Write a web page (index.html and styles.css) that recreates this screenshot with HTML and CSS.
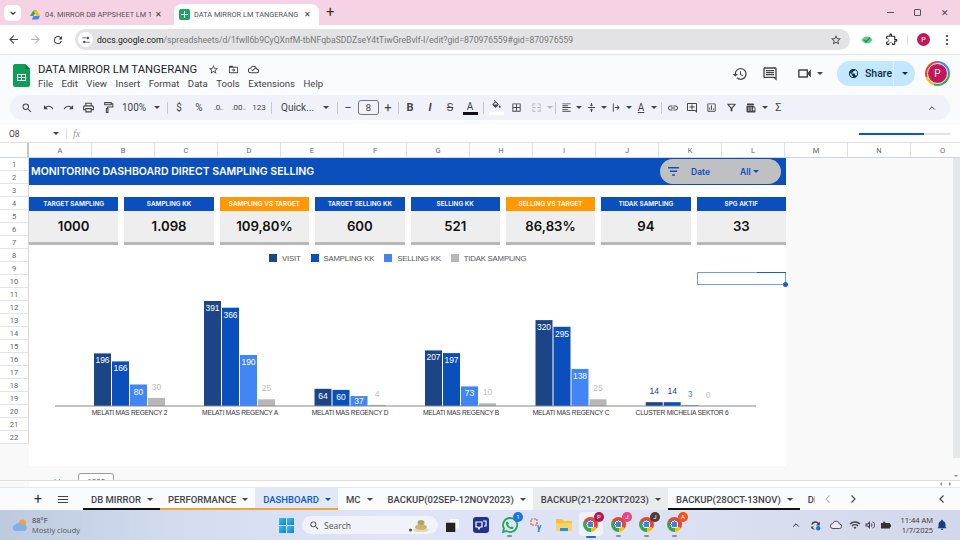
FILE: index.html
```html
<!DOCTYPE html>
<html lang="en">
<head>
    <meta charset="UTF-8">
    <meta name="viewport" content="width=device-width, initial-scale=1.0">
    <title>DATA MIRROR LM TANGERANG</title>
    <link rel="stylesheet" href="styles.css">
</head>
<body>
    <svg class="sprite" aria-hidden="true">
        <symbol id="i-back" viewBox="0 0 24 24"><path d="M20 11H7.8l5.6-5.6L12 4l-8 8 8 8 1.4-1.4L7.8 13H20z"/></symbol>
        <symbol id="i-forward" viewBox="0 0 24 24"><path d="M4 11h12.2l-5.6-5.6L12 4l8 8-8 8-1.4-1.4 5.6-5.6H4z"/></symbol>
        <symbol id="i-reload" viewBox="0 0 24 24"><path d="M17.65 6.35A7.96 7.96 0 0 0 12 4a8 8 0 1 0 7.73 10h-2.08A6 6 0 1 1 12 6c1.66 0 3.14.69 4.22 1.78L13 11h7V4l-2.35 2.35z"/></symbol>
        <symbol id="i-tune" viewBox="0 0 24 24"><path d="M3 6h9v2H3zM16 4a3 3 0 1 1 0 6 3 3 0 0 1 0-6zm0 2v2a1 1 0 0 0 0-2zM12 16h9v2h-9zM8 14a3 3 0 1 1 0 6 3 3 0 0 1 0-6zm0 2a1 1 0 0 0 0 2z"/></symbol>
        <symbol id="i-star" viewBox="0 0 24 24"><path d="M22 9.24l-7.19-.62L12 2 9.19 8.63 2 9.24l5.46 4.73L5.82 21 12 17.27 18.18 21l-1.63-7.03L22 9.24zM12 15.4l-3.76 2.27 1-4.28-3.32-2.88 4.38-.38L12 6.1l1.71 4.04 4.38.38-3.32 2.88 1 4.28L12 15.4z"/></symbol>
        <symbol id="i-puzzle" viewBox="0 0 24 24"><path d="M20.5 11H19V7a2 2 0 0 0-2-2h-4V3.5a2.5 2.5 0 0 0-5 0V5H4a2 2 0 0 0-2 2v3.8h1.5a2.7 2.7 0 0 1 0 5.4H2V20a2 2 0 0 0 2 2h3.8v-1.5a2.7 2.7 0 0 1 5.4 0V22H17a2 2 0 0 0 2-2v-4h1.5a2.5 2.5 0 0 0 0-5zm0 3H17v6h-2.1a4.7 4.7 0 0 0-8.8 0H4v-2.1a4.7 4.7 0 0 0 0-8.8V7h6V3.5a.5.5 0 0 1 1 0V7h6v6h3.5a.5.5 0 0 1 0 1z"/></symbol>
        <symbol id="i-search" viewBox="0 0 24 24"><path d="M15.5 14h-.79l-.28-.27A6.471 6.471 0 0 0 16 9.5 6.5 6.5 0 1 0 9.5 16c1.61 0 3.09-.59 4.23-1.57l.27.28v.79l5 4.99L20.49 19l-4.99-5zm-6 0C7.01 14 5 11.99 5 9.5S7.01 5 9.5 5 14 7.01 14 9.5 11.99 14 9.5 14z"/></symbol>
        <symbol id="i-undo" viewBox="0 0 24 24"><path d="M12.5 8c-2.65 0-5.05.99-6.9 2.6L2 7v9h9l-3.62-3.62c1.39-1.16 3.16-1.88 5.12-1.88 3.54 0 6.55 2.31 7.6 5.5l2.37-.78C21.08 11.03 17.15 8 12.5 8z"/></symbol>
        <symbol id="i-redo" viewBox="0 0 24 24"><path d="M18.4 10.6C16.55 8.99 14.15 8 11.5 8c-4.65 0-8.58 3.03-9.96 7.22L3.9 16c1.05-3.19 4.05-5.5 7.6-5.5 1.95 0 3.73.72 5.12 1.88L13 16h9V7l-3.6 3.6z"/></symbol>
        <symbol id="i-print" viewBox="0 0 24 24"><path d="M19 8h-1V3H6v5H5c-1.66 0-3 1.34-3 3v6h4v4h12v-4h4v-6c0-1.66-1.34-3-3-3zM8 5h8v3H8V5zm8 12v2H8v-4h8v2zm2-2v-2H6v2H4v-4c0-.55.45-1 1-1h14c.55 0 1 .45 1 1v4h-2z"/></symbol>
        <symbol id="i-paint" viewBox="0 0 24 24"><path d="M18 4V3a1 1 0 0 0-1-1H5a1 1 0 0 0-1 1v4a1 1 0 0 0 1 1h12a1 1 0 0 0 1-1V6h1v4H9v3H8a1 1 0 0 0-1 1v7a1 1 0 0 0 1 1h3a1 1 0 0 0 1-1v-7a1 1 0 0 0-1-1v-1h10V4h-3zm-2 2H6V4h10v2zm-6 14H9v-5h1v5z"/></symbol>
        <symbol id="i-fill" viewBox="0 0 24 24"><path d="M16.56 8.94L7.62 0 6.21 1.41l2.38 2.38-5.15 5.15a1.49 1.49 0 0 0 0 2.12l5.5 5.5c.29.29.68.44 1.06.44s.77-.15 1.06-.44l5.5-5.5c.59-.58.59-1.53 0-2.12zM5.21 10L10 5.21 14.79 10H5.21zM19 11.5s-2 2.17-2 3.5c0 1.1.9 2 2 2s2-.9 2-2c0-1.33-2-3.5-2-3.5z"/></symbol>
        <symbol id="i-borders" viewBox="0 0 24 24"><path d="M3 3v18h18V3H3zm8 16H5v-6h6v6zm0-8H5V5h6v6zm8 8h-6v-6h6v6zm0-8h-6V5h6v6z"/></symbol>
        <symbol id="i-merge" viewBox="0 0 24 24"><path d="M3 3h7v2H5v4H3zM14 3h7v6h-2V5h-5zM3 15h2v4h5v2H3zM19 15h2v6h-7v-2h5zM3 11h7v2H3zM14 11h7v2h-7z"/></symbol>
        <symbol id="i-align" viewBox="0 0 24 24"><path d="M3 3h18v2H3zM3 7h12v2H3zM3 11h18v2H3zM3 15h12v2H3zM3 19h18v2H3z"/></symbol>
        <symbol id="i-valign" viewBox="0 0 24 24"><path d="M8 18h3v4h2v-4h3l-4-4-4 4zM16 6h-3V2h-2v4H8l4 4 4-4zM4 11h16v2H4z"/></symbol>
        <symbol id="i-wrap" viewBox="0 0 24 24"><path d="M4 3h2v18H4zM8 11h7.2l-2.6-2.6L14 7l5 5-5 5-1.4-1.4 2.6-2.6H8z"/></symbol>
        <symbol id="i-link" viewBox="0 0 24 24"><path d="M3.9 12c0-1.71 1.39-3.1 3.1-3.1h4V7H7c-2.76 0-5 2.24-5 5s2.24 5 5 5h4v-1.9H7c-1.71 0-3.1-1.39-3.1-3.1zM8 13h8v-2H8v2zm9-6h-4v1.9h4c1.71 0 3.1 1.39 3.1 3.1s-1.39 3.1-3.1 3.1h-4V17h4c2.76 0 5-2.24 5-5s-2.24-5-5-5z"/></symbol>
        <symbol id="i-addcomment" viewBox="0 0 24 24"><path d="M22 4a2 2 0 0 0-2-2H4a2 2 0 0 0-2 2v12a2 2 0 0 0 2 2h14l4 4V4zm-2 13.2L18.8 16H4V4h16v13.2zM13 5h-2v4H7v2h4v4h2v-4h4V9h-4z"/></symbol>
        <symbol id="i-chart" viewBox="0 0 24 24"><path d="M19 3H5a2 2 0 0 0-2 2v14a2 2 0 0 0 2 2h14a2 2 0 0 0 2-2V5a2 2 0 0 0-2-2zm0 16H5V5h14v14zM7 12h2v5H7zM11 7h2v10h-2zM15 14h2v3h-2z"/></symbol>
        <symbol id="i-filter" viewBox="0 0 24 24"><path d="M3 4h18v2l-7 8v6h-4v-6L3 6V4zm3.2 2l5.8 6.7L17.8 6H6.2z"/></symbol>
        <symbol id="i-func" viewBox="0 0 24 24"><path d="M4 3h12a2 2 0 0 1 2 2v2H4zM3 8h13a5 5 0 0 1 5 5v6a2 2 0 0 1-2 2H5a2 2 0 0 1-2-2zm3 3v2h3v-2zm5 0v2h3v-2zm-5 4v2h3v-2zm5 0v2h3v-2zm5-4v6h3v-6z"/></symbol>
        <symbol id="i-history" viewBox="0 0 24 24"><path d="M13 3a9 9 0 0 0-9 9H1l3.89 3.89.07.14L9 12H6c0-3.87 3.13-7 7-7s7 3.13 7 7-3.13 7-7 7c-1.93 0-3.68-.79-4.94-2.06l-1.42 1.42A8.954 8.954 0 0 0 13 21a9 9 0 0 0 0-18zm-1 5v5l4.28 2.54.72-1.21-3.5-2.08V8H12z"/></symbol>
        <symbol id="i-comment" viewBox="0 0 24 24"><path d="M21.99 4c0-1.1-.89-2-1.99-2H4c-1.1 0-2 .9-2 2v12c0 1.1.9 2 2 2h14l4 4-.01-18zM20 4v13.17L18.83 16H4V4h16zM6 12h12v2H6zm0-3h12v2H6zm0-3h12v2H6z"/></symbol>
        <symbol id="i-video" viewBox="0 0 24 24"><path d="M15 8v8H5V8h10m1-2H4c-.55 0-1 .45-1 1v10c0 .55.45 1 1 1h12c.55 0 1-.45 1-1v-3.5l4 4v-11l-4 4V7c0-.55-.45-1-1-1z"/></symbol>
        <symbol id="i-public" viewBox="0 0 24 24"><path d="M12 2C6.48 2 2 6.48 2 12s4.48 10 10 10 10-4.48 10-10S17.52 2 12 2zm-1 17.93c-3.95-.49-7-3.85-7-7.93 0-.62.08-1.21.21-1.79L9 15v1c0 1.1.9 2 2 2v1.93zm6.9-2.54c-.26-.81-1-1.39-1.9-1.39h-1v-3c0-.55-.45-1-1-1H8v-2h2c.55 0 1-.45 1-1V7h2c1.1 0 2-.9 2-2v-.41c2.93 1.19 5 4.06 5 7.41 0 2.08-.8 3.97-2.1 5.39z"/></symbol>
        <symbol id="i-bell" viewBox="0 0 24 24"><path d="M12 22a2.5 2.5 0 0 0 2.5-2.5h-5A2.5 2.5 0 0 0 12 22zm7-6v-5c0-3.4-1.9-6.1-5-6.8V3.5a2 2 0 0 0-4 0v.7C6.9 4.9 5 7.6 5 11v5l-2 2v.5h18V18z"/></symbol>
        <symbol id="i-wifi" viewBox="0 0 24 24"><path d="M1 9l2 2a12.7 12.7 0 0 1 18 0l2-2A15.6 15.6 0 0 0 1 9zm4 4l2 2a7 7 0 0 1 10 0l2-2a9.9 9.9 0 0 0-14 0zm4 4l3 3 3-3a4.2 4.2 0 0 0-6 0z"/></symbol>
        <symbol id="i-volume" viewBox="0 0 24 24"><path d="M3 9v6h4l5 5V4L7 9H3zm7 .8v4.4L7.8 13H5v-2h2.8L10 9.8zM14.5 8v8a4.5 4.5 0 0 0 0-8zM17 4.5v2a6 6 0 0 1 0 11v2a8 8 0 0 0 0-15z"/></symbol>
    </svg>

    <div class="tabstrip">
        <span class="tab-menu"><svg class="ic ic8" viewBox="0 0 10 10"><path d="M2 3.5l3 3 3-3" fill="none" stroke="#222" stroke-width="1.4"/></svg></span>
        <div class="browser-tab">
            <svg class="ic ic12" viewBox="0 0 24 24"><path d="M8.5 3h7L9 14H2z" fill="#34a853"/><path d="M15.5 3L22 14h-7L8.5 3z" fill="#fbbc04"/><path d="M5.5 21L9 14h13l-3.5 7z" fill="#4285f4"/></svg>
            <span class="browser-tab-title">04. MIRROR DB APPSHEET LM T</span>
            <span class="tab-x">✕</span>
        </div>
        <div class="browser-tab is-active">
            <span class="sheets-mini"></span>
            <span class="browser-tab-title">DATA MIRROR LM TANGERANG</span>
            <span class="tab-x">✕</span>
        </div>
        <span class="tab-new">+</span>
        <div class="window-btns">
            <span class="win-min"></span>
            <span class="win-max"></span>
            <span class="win-close">✕</span>
        </div>
    </div>

    <div class="addressbar">
        <svg class="ic ic13"><use href="#i-back"/></svg>
        <svg class="ic ic13 is-dim"><use href="#i-forward"/></svg>
        <svg class="ic ic12"><use href="#i-reload"/></svg>
        <div class="omnibox">
            <span class="omni-tune"><svg class="ic ic10"><use href="#i-tune"/></svg></span>
            <span class="omni-url"><b>docs.google.com</b>/spreadsheets/d/1fwll6b9CyQXnfM-tbNFqbaSDDZseY4tTiwGreBvlf-I/edit?gid=870976559#gid=870976559</span>
            <svg class="ic ic12"><use href="#i-star"/></svg>
        </div>
        <svg class="ic ic12 ext-eye" viewBox="0 0 24 24"><path d="M1 12c3-5 7-7 11-7s8 2 11 7c-3 5-7 7-11 7S4 17 1 12z" fill="#5fc98b"/><path d="M7 12l3 4 8-9" fill="none" stroke="#1a8f4c" stroke-width="2.4"/></svg>
        <svg class="ic ic13 ext-puzzle"><use href="#i-puzzle"/></svg>
        <span class="addr-sep"></span>
        <span class="profile-dot">P</span>
        <span class="kebab"><i></i><i></i><i></i></span>
    </div>

    <header class="docs-head">
        <div class="docs-top">
            <svg class="sheets-logo" viewBox="0 0 17 23"><path d="M2 0h10l5 5v16a2 2 0 0 1-2 2H2a2 2 0 0 1-2-2V2a2 2 0 0 1 2-2z" fill="#0f9d58"/><path d="M12 0l5 5h-5z" fill="#0b7a44"/><path d="M4 10h9v7H4zm1 1v2h3v-2zm4 0v2h3v-2zm-4 3v2h3v-2zm4 0v2h3v-2z" fill="#fff"/></svg>
            <div class="docs-titles">
                <div class="docs-title-row">
                    <span class="docs-title">DATA MIRROR LM TANGERANG</span>
                    <svg class="ic ic11"><use href="#i-star"/></svg>
                    <svg class="ic ic11" viewBox="0 0 24 24"><path d="M10 4l2 2h8a2 2 0 0 1 2 2v10a2 2 0 0 1-2 2H4a2 2 0 0 1-2-2V6a2 2 0 0 1 2-2zM4 8v10h16V8zm8 1l4 4-4 4v-3H8v-2h4z"/></svg>
                    <svg class="ic ic11" viewBox="0 0 24 24"><path d="M19.4 10A7.5 7.5 0 0 0 5.4 8 6 6 0 0 0 6 20h13a5 5 0 0 0 .4-10zM19 18H6a4 4 0 0 1 0-8h.7A5.5 5.5 0 0 1 17.5 11.5V12H19a3 3 0 0 1 0 6zM10 16l-3-3 1.4-1.4L10 13.2l5.6-5.6L17 9z"/></svg>
                </div>
                <nav class="docs-menu">
                    <span>File</span><span>Edit</span><span>View</span><span>Insert</span><span>Format</span><span>Data</span><span>Tools</span><span>Extensions</span><span>Help</span>
                </nav>
            </div>
            <div class="docs-actions">
                <svg class="ic ic16 act-history"><use href="#i-history"/></svg>
                <svg class="ic ic16 act-comment"><use href="#i-comment"/></svg>
                <svg class="ic ic17 act-video"><use href="#i-video"/></svg>
                <span class="caret act-caret"></span>
                <div class="share">
                    <span class="share-main"><svg class="ic ic11"><use href="#i-public"/></svg>Share</span>
                    <span class="share-more"><span class="caret"></span></span>
                </div>
                <span class="avatar"><span>P</span></span>
            </div>
        </div>
        <div class="toolbar">
            <span class="tb tb-first"><svg class="ic ic12"><use href="#i-search"/></svg></span>
            <span class="tb"><svg class="ic ic11"><use href="#i-undo"/></svg></span>
            <span class="tb"><svg class="ic ic11"><use href="#i-redo"/></svg></span>
            <span class="tb"><svg class="ic ic13"><use href="#i-print"/></svg></span>
            <span class="tb"><svg class="ic ic13"><use href="#i-paint"/></svg></span>
            <span class="tb-text tb-zoom">100%</span>
            <span class="tb-caret"><span class="caret"></span></span>
            <span class="tb-sep sep-zoom"></span>
            <span class="tb tb-sym">$</span>
            <span class="tb tb-sym">%</span>
            <span class="tb tb-sym tb-small">.0<sub>←</sub></span>
            <span class="tb tb-sym tb-small">.00<sub>→</sub></span>
            <span class="tb tb-sym tb-small">123</span>
            <span class="tb-sep sep-num"></span>
            <span class="tb-text tb-font">Quick...</span>
            <span class="tb-caret"><span class="caret"></span></span>
            <span class="tb-sep sep-font"></span>
            <span class="tb tb-sym tb-big">−</span>
            <span class="tb-size">8</span>
            <span class="tb tb-sym tb-big tb-plus">+</span>
            <span class="tb-sep sep-size"></span>
            <span class="tb tb-sym tb-b">B</span>
            <span class="tb tb-sym tb-i">I</span>
            <span class="tb tb-sym tb-s">S</span>
            <span class="tb tb-sym tb-a"><span>A</span></span>
            <span class="tb-sep sep-size"></span>
            <span class="tb tb-fill"><svg class="ic ic11"><use href="#i-fill"/></svg><i></i></span>
            <span class="tb"><svg class="ic ic11"><use href="#i-borders"/></svg></span>
            <span class="tb is-off"><svg class="ic ic11"><use href="#i-merge"/></svg></span>
            <span class="tb-caret tb-caret-sm is-off"><span class="caret"></span></span>
            <span class="tb-sep sep-merge"></span>
            <span class="tb tb-n tb-align"><svg class="ic ic11"><use href="#i-align"/></svg></span>
            <span class="tb-caret"><span class="caret"></span></span>
            <span class="tb tb-n"><svg class="ic ic11"><use href="#i-valign"/></svg></span>
            <span class="tb-caret"><span class="caret"></span></span>
            <span class="tb tb-n"><svg class="ic ic11"><use href="#i-wrap"/></svg></span>
            <span class="tb-caret"><span class="caret"></span></span>
            <span class="tb tb-n tb-sym tb-rot">A</span>
            <span class="tb-caret"><span class="caret"></span></span>
            <span class="tb-sep sep-rot"></span>
            <span class="tb tb-m"><svg class="ic ic12"><use href="#i-link"/></svg></span>
            <span class="tb tb-m"><svg class="ic ic12"><use href="#i-addcomment"/></svg></span>
            <span class="tb tb-m"><svg class="ic ic11"><use href="#i-chart"/></svg></span>
            <span class="tb tb-m"><svg class="ic ic11"><use href="#i-filter"/></svg></span>
            <span class="tb tb-m"><svg class="ic ic12"><use href="#i-func"/></svg></span>
            <span class="tb-caret tb-caret-sm"><span class="caret"></span></span>
            <span class="tb tb-sym tb-sigma">Σ</span>
            <span class="tb tb-collapse"><svg class="ic ic8" viewBox="0 0 10 10"><path d="M1.5 7L5 3.5 8.5 7" fill="none" stroke="#444" stroke-width="1.2"/></svg></span>
        </div>
    </header>

    <div class="formula-bar">
        <span class="name-box">O8</span>
        <span class="caret"></span>
        <span class="fx-sep"></span>
        <span class="fx">fx</span>
        <span class="hscroll"><i></i></span>
    </div>

    <div class="col-heads">
        <span class="corner"></span>
        <span>A</span><span>B</span><span>C</span><span>D</span><span>E</span><span>F</span><span>G</span><span>H</span><span>I</span><span>J</span><span>K</span><span>L</span><span>M</span><span>N</span><span class="col-last">O</span>
    </div>

    <div class="sheet">
        <div class="row-heads">
            <span>1</span><span>2</span><span>3</span><span>4</span><span>5</span><span>6</span><span>7</span><span>8</span><span>9</span><span>10</span><span>11</span>
            <span>12</span><span>13</span><span>14</span><span>15</span><span>16</span><span>17</span><span>18</span><span>19</span><span>20</span><span>21</span><span>22</span>
        </div>
        <main class="dash">
            <div class="banner">
                <h1>MONITORING DASHBOARD DIRECT SAMPLING SELLING</h1>
                <div class="date-pill">
                    <svg class="pill-filter" viewBox="0 0 12 10"><path d="M0 0h12v1.6H0zM2 4h8v1.6H2zM4.5 8h3v1.6h-3z"/></svg>
                    <span class="pill-label">Date</span>
                    <span class="pill-value">All</span>
                    <span class="caret"></span>
                </div>
            </div>
            <div class="cards">
                <div class="card"><div class="card-head">TARGET SAMPLING</div><div class="card-value">1000</div></div>
                <div class="card"><div class="card-head">SAMPLING KK</div><div class="card-value">1.098</div></div>
                <div class="card is-orange"><div class="card-head">SAMPLING VS TARGET</div><div class="card-value">109,80%</div></div>
                <div class="card"><div class="card-head">TARGET SELLING KK</div><div class="card-value">600</div></div>
                <div class="card"><div class="card-head">SELLING KK</div><div class="card-value">521</div></div>
                <div class="card is-orange"><div class="card-head">SELLING VS TARGET</div><div class="card-value">86,83%</div></div>
                <div class="card"><div class="card-head">TIDAK SAMPLING</div><div class="card-value">94</div></div>
                <div class="card"><div class="card-head">SPG AKTIF</div><div class="card-value">33</div></div>
            </div>
            <div class="legend">
                <span class="legend-item"><i class="c-visit"></i>VISIT</span>
                <span class="legend-item"><i class="c-sampling"></i>SAMPLING KK</span>
                <span class="legend-item"><i class="c-selling"></i>SELLING KK</span>
                <span class="legend-item"><i class="c-tidak"></i>TIDAK SAMPLING</span>
            </div>
            <svg class="chart" viewBox="29 265 757 201">
                <g class="bars-visit">
                    <rect x="94" y="353.4" width="17" height="52.6"/><rect x="204" y="301" width="17" height="105"/><rect x="314.5" y="388.8" width="17" height="17.2"/>
                    <rect x="425" y="350.4" width="17" height="55.6"/><rect x="535.5" y="320.1" width="17" height="85.9"/><rect x="645.7" y="402.2" width="17" height="3.8"/>
                </g>
                <g class="bars-sampling">
                    <rect x="112" y="361.4" width="17" height="44.6"/><rect x="222" y="307.7" width="17" height="98.3"/><rect x="332.5" y="389.9" width="17" height="16.1"/>
                    <rect x="443" y="353.1" width="17" height="52.9"/><rect x="553.5" y="326.8" width="17" height="79.2"/><rect x="663.7" y="402.2" width="17" height="3.8"/>
                </g>
                <g class="bars-selling">
                    <rect x="130" y="384.5" width="17" height="21.5"/><rect x="240" y="355" width="17" height="51"/><rect x="350.5" y="396.1" width="17" height="9.9"/>
                    <rect x="461" y="386.4" width="17" height="19.6"/><rect x="571.5" y="368.9" width="17" height="37.1"/><rect x="681.7" y="405.2" width="17" height=".8"/>
                </g>
                <g class="bars-tidak">
                    <rect x="148" y="397.9" width="17" height="8.1"/><rect x="258" y="399.3" width="17" height="6.7"/><rect x="368.5" y="404.9" width="17" height="1.1"/>
                    <rect x="479" y="403.3" width="17" height="2.7"/><rect x="589.5" y="399.3" width="17" height="6.7"/>
                </g>
                <line class="axis" x1="55" y1="406" x2="756" y2="406"/>
                <g class="val-in">
                    <text x="102.5" y="363.4">196</text><text x="120.5" y="371.4">166</text><text x="138.5" y="394.5">80</text>
                    <text x="212.5" y="311">391</text><text x="230.5" y="317.7">366</text><text x="248.5" y="365">190</text>
                    <text x="323" y="398.8">64</text><text x="341" y="399.9">60</text><text x="359" y="403.6">37</text>
                    <text x="433.5" y="360.4">207</text><text x="451.5" y="363.1">197</text><text x="469.5" y="396.4">73</text>
                    <text x="544" y="330.1">320</text><text x="562" y="336.8">295</text><text x="580" y="378.9">138</text>
                </g>
                <g class="val-out">
                    <text x="156.5" y="390">30</text><text x="266.5" y="391">25</text><text x="377" y="397">4</text>
                    <text x="487.5" y="395">10</text><text x="598" y="391">25</text><text x="708.2" y="398">0</text>
                </g>
                <g class="val-blue">
                    <text x="654.2" y="394">14</text><text x="672.2" y="394">14</text>
                </g>
                <text class="val-light" x="690.2" y="397">3</text>
                <g class="cat">
                    <text x="129.5" y="415">MELATI MAS REGENCY 2</text><text x="240" y="415">MELATI MAS REGENCY A</text><text x="350" y="415">MELATI MAS REGENCY D</text>
                    <text x="461" y="415">MELATI MAS REGENCY B</text><text x="571" y="415">MELATI MAS REGENCY C</text><text x="682" y="415">CLUSTER MICHELIA SEKTOR 6</text>
                </g>
            </svg>
            <span class="selection"><b></b><i></i></span>
        </main>
        <div class="sheet-side"></div>
        <div class="vscroll"><i></i></div>
    </div>
    <div class="peek">
        <span class="peek-link">add</span>
        <span class="peek-box">1000</span>
        <span class="peek-arrows"><i class="arrow-down"></i></span>
    </div>
    <div class="hstrip"><i class="arrow-left"></i><i class="arrow-right"></i></div>

    <div class="sheet-tabs">
        <span class="st-add">+</span>
        <span class="st-list"><i></i><i></i><i></i></span>
        <div class="st-list-wrap">
            <span class="st u-black">DB MIRROR<span class="caret"></span></span>
            <span class="st u-orange">PERFORMANCE<span class="caret"></span></span>
            <span class="st u-orange is-active">DASHBOARD<span class="caret"></span></span>
            <span class="st">MC<span class="caret"></span></span>
            <span class="st">BACKUP(02SEP-12NOV2023)<span class="caret"></span></span>
            <span class="st is-grey">BACKUP(21-22OKT2023)<span class="caret"></span></span>
            <span class="st u-black">BACKUP(28OCT-13NOV)<span class="caret"></span></span>
            <span class="st">DB</span>
        </div>
        <svg class="ic ic10 st-prev" viewBox="0 0 10 10"><path d="M6.5 1.5L3 5l3.5 3.5" fill="none" stroke="#bbb" stroke-width="1.1"/></svg>
        <svg class="ic ic10 st-next" viewBox="0 0 10 10"><path d="M3.5 1.5L7 5 3.5 8.5" fill="none" stroke="#444" stroke-width="1.1"/></svg>
        <svg class="ic ic10 st-side" viewBox="0 0 10 10"><path d="M6.5 1.5L3 5l3.5 3.5" fill="none" stroke="#444" stroke-width="1.2"/></svg>
    </div>

    <footer class="taskbar">
        <div class="weather">
            <svg class="weather-ic" viewBox="0 0 16 14"><circle cx="10.5" cy="5" r="3.5" fill="#f5a03a"/><path d="M3.5 13a3 3 0 0 1-.5-5.9A4 4 0 0 1 10 6.5a3.2 3.2 0 0 1 2.5 6.5z" fill="#7fb0e6"/></svg>
            <div class="weather-text"><span>88°F</span><span class="weather-sub">Mostly cloudy</span></div>
        </div>
        <div class="task-center">
            <span class="win-logo"><i></i><i></i><i></i><i></i></span>
            <div class="task-search">
                <svg class="ic ic11"><use href="#i-search"/></svg>
                <span>Search</span>
                <svg class="search-art" viewBox="0 0 22 14"><ellipse cx="13" cy="12" rx="8" ry="2" fill="#e4d9a8"/><ellipse cx="13" cy="9" rx="6" ry="3" fill="#c6b774"/><ellipse cx="13" cy="4.5" rx="3.5" ry="2.5" fill="#a9a85e"/><circle cx="2.5" cy="12" r="1.5" fill="#5b4a33"/></svg>
            </div>
            <svg class="task-view" viewBox="0 0 14 14"><rect x="4" y="0" width="10" height="10" fill="#f6f7fb"/><rect x="0" y="4" width="10" height="10" fill="#222"/></svg>
            <svg class="app-teams" viewBox="0 0 16 16"><rect width="16" height="16" rx="3" fill="#23318f"/><path d="M3 5h6v5H7l-1 2-1-2H3zM10 4h3v5h-2" fill="none" stroke="#fff" stroke-width="1.2"/></svg>
            <span class="app app-wa is-pinned"><svg viewBox="0 0 16 16"><path d="M8 1a7 7 0 0 0-6 10.5L1 15l3.6-1A7 7 0 1 0 8 1z" fill="none" stroke="#23a85a" stroke-width="1.8"/><path d="M5.5 4.5l1.5 2-1 1c.5 1.2 1.5 2.2 2.8 2.8l1-1 2 1.5c-.5 1.5-2.3 1.500-3.500 1-2-.8-3.500-2.300-4.200-4.300-.4-1.200-.2-2.500 1.400-3z" fill="#23a85a"/></svg><b class="badge b-blue">1</b></span>
            <span class="app app-snip"><svg viewBox="0 0 16 16"><path d="M2 2h6v6H2z" fill="none" stroke="#d55" stroke-width="1.2" stroke-dasharray="2 1"/><path d="M9 8l1 7M12 8l-3 7" stroke="#3d8ad6" stroke-width="1.4" fill="none"/></svg></span>
            <span class="app app-folder"><svg viewBox="0 0 16 14"><path d="M0 1h6l2 2h8v10H0z" fill="#f2c23c"/><path d="M0 5h16v8H0z" fill="#f7d46a"/><path d="M4 10h8v3H4z" fill="#2b8fd6"/></svg></span>
            <span class="app app-chrome is-open"><span class="chrome-ic"></span><b class="badge b-rose">P</b></span>
            <span class="app app-chrome is-pinned"><span class="chrome-ic"></span><b class="badge b-pink">J</b></span>
            <span class="app app-chrome is-pinned"><span class="chrome-ic"></span><b class="badge b-brown">J</b></span>
            <span class="app app-chrome is-pinned"><span class="chrome-ic"></span><b class="badge b-orange">A</b></span>
        </div>
        <div class="tray">
            <svg class="ic ic8 tray-up" viewBox="0 0 10 10"><path d="M1.5 7L5 3.5 8.5 7" fill="none" stroke="#222" stroke-width="1.2"/></svg>
            <svg class="ic ic13 tray-sync" viewBox="0 0 24 24"><path d="M4 10a8 8 0 0 1 14-3l2-2v7h-7l3-3a6 6 0 0 0-10 2zM4 14h5l-2 2a6 6 0 0 0 3 2v2a8 8 0 0 1-5-3l-1 1z" fill="#444"/><circle cx="17" cy="17" r="4" fill="#1a73e8"/></svg>
            <svg class="ic ic12 tray-cloud" viewBox="0 0 24 24"><path d="M6 19a5 5 0 0 1-.5-10A7 7 0 0 1 19 10a4.5 4.5 0 0 1 0 9z" fill="#e9ebf2" stroke="#444" stroke-width="1.8"/></svg>
            <svg class="ic ic12 tray-wifi"><use href="#i-wifi"/></svg>
            <svg class="ic ic12 tray-vol"><use href="#i-volume"/></svg>
            <svg class="ic ic12 tray-bat" viewBox="0 0 24 24"><path d="M2 8h18v11H2zM20 11h2v5h-2zM8 4l3 4H6z" fill="#333"/></svg>
            <div class="clock"><span>11:44 AM</span><span>1/7/2025</span></div>
            <svg class="ic ic12 tray-bell"><use href="#i-bell"/></svg>
        </div>
    </footer>
</body>
</html>
```

FILE: styles.css
```css
* {
    box-sizing: border-box;
}

body {
    margin: 0;
    width: 960px;
    height: 540px;
    overflow: hidden;
    position: relative;
    display: flex;
    flex-direction: column;
    font-family: "Roboto", "Liberation Sans", sans-serif;
    color: #444;
    background: #fff;
}

.sprite {
    position: absolute;
    width: 0;
    height: 0;
}

.ic {
    display: block;
    flex: none;
    fill: #444;
}

.ic8 { width: 8px; height: 8px; }
.ic10 { width: 10px; height: 10px; }
.ic11 { width: 11px; height: 11px; }
.ic12 { width: 12px; height: 12px; }
.ic13 { width: 13px; height: 13px; }
.ic16 { width: 16px; height: 16px; }
.ic17 { width: 17px; height: 17px; }

.caret {
    display: inline-block;
    flex: none;
    width: 0;
    height: 0;
    border-left: 3px solid transparent;
    border-right: 3px solid transparent;
    border-top: 3px solid #444;
}

/* browser chrome */
.tabstrip {
    height: 25px;
    flex: none;
    display: flex;
    align-items: flex-end;
    background: #f6d3e4;
    padding-left: 4px;
}

.tab-menu {
    width: 17px;
    height: 16px;
    margin-bottom: 4px;
    background: #fff;
    border-radius: 5px;
    display: flex;
    align-items: center;
    justify-content: center;
}

.browser-tab {
    height: 21px;
    display: flex;
    align-items: center;
    padding: 0 6px 0 3px;
    font-size: 7.4px;
    color: #555;
    width: 145px;
    margin-left: 5px;
    margin-right: 3px;
}

.browser-tab .ic {
    margin-right: 4px;
}

.browser-tab.is-active {
    background: #fff;
    border-radius: 8px 8px 0 0;
    padding: 0 5px;
    margin: 0;
}

.browser-tab-title {
    flex: 1;
    min-width: 0;
    white-space: nowrap;
    overflow: hidden;
    margin-bottom: 1px;
}

.sheets-mini {
    width: 11px;
    height: 11px;
    margin-right: 4px;
    flex: none;
    border-radius: 2px;
    background-color: #1ea362;
    background-image: linear-gradient(#fff, #fff), linear-gradient(#fff, #fff);
    background-size: 7px 1px, 1px 7px;
    background-position: center, center;
    background-repeat: no-repeat;
}

.tab-x {
    font-size: 8px;
    color: #333;
    margin-left: 4px;
    width: 10px;
    flex: none;
}

.tab-new {
    font-size: 15px;
    line-height: 15px;
    color: #333;
    margin: 0 0 5px 7px;
}

.window-btns {
    margin-left: auto;
    display: flex;
    align-items: center;
    height: 25px;
    gap: 20px;
    padding-right: 11px;
    color: #444;
}

.win-min {
    width: 7px;
    height: 1px;
    background: #555;
}

.win-max {
    width: 7px;
    height: 7px;
    border: 1px solid #555;
    border-radius: 1px;
}

.win-close {
    font-size: 9px;
}

.addressbar {
    height: 30px;
    flex: none;
    display: flex;
    align-items: center;
    background: #fff;
    border-bottom: 1px solid #e3e3e3;
    padding-left: 7px;
}

.addressbar > .ic:nth-child(2) {
    margin-left: 9px;
}

.addressbar > .ic:nth-child(3) {
    margin-left: 10px;
}

.is-dim {
    opacity: .4;
}

.omnibox {
    width: 775px;
    height: 21px;
    margin-left: 11px;
    border-radius: 11px;
    background: #e3e3e5;
    display: flex;
    align-items: center;
    padding: 0 8px 0 3px;
}

.omni-tune {
    width: 15px;
    height: 15px;
    border-radius: 50%;
    background: #fff;
    display: flex;
    align-items: center;
    justify-content: center;
}

.omni-url {
    flex: 1;
    margin-left: 4px;
    font-size: 8.65px;
    color: #777;
    white-space: nowrap;
}

.omni-url b {
    font-weight: 400;
    color: #222;
}

.ext-eye {
    margin-left: 11px;
}

.ext-puzzle {
    margin-left: 12px;
    fill: #222;
}

.addr-sep {
    width: 1px;
    height: 10px;
    margin-left: 9px;
    background: #f3d4e2;
}

.profile-dot {
    width: 13px;
    height: 13px;
    margin-left: 9px;
    border-radius: 50%;
    background: #c2185b;
    color: #fff;
    font-size: 7px;
    display: flex;
    align-items: center;
    justify-content: center;
}

.kebab {
    margin-left: 16px;
    display: flex;
    flex-direction: column;
    gap: 2px;
}

.kebab i {
    width: 2px;
    height: 2px;
    border-radius: 50%;
    background: #222;
}

/* sheets header */
.docs-head {
    height: 70px;
    flex: none;
    background: #f9fbfd;
    padding: 7px 10px 0;
}

.docs-top {
    height: 33px;
    display: flex;
    align-items: flex-start;
}

.sheets-logo {
    width: 17px;
    height: 23px;
    margin: 2px 0 0 3px;
    flex: none;
}

.docs-titles {
    margin-left: 8px;
    flex: 1;
}

.docs-title-row {
    display: flex;
    align-items: center;
    gap: 9px;
    height: 14px;
}

.docs-title {
    font-size: 11.3px;
    color: #1f1f1f;
    margin-right: 2px;
}

.docs-menu {
    display: flex;
    gap: 8.5px;
    margin-top: 2px;
    font-size: 9.6px;
    color: #444;
}

.docs-actions {
    display: flex;
    align-items: center;
    height: 25px;
    margin-top: -1px;
}

.act-comment { margin-left: 14px; }
.act-video { margin-left: 18px; }
.act-caret { margin-left: 4px; }

.share {
    margin-left: 14px;
    width: 78px;
    height: 25px;
    border-radius: 13px;
    background: #c2e7ff;
    display: flex;
    font-size: 10.5px;
    font-weight: 500;
    color: #0b2d4a;
}

.share-main {
    width: 57px;
    display: flex;
    align-items: center;
    gap: 6px;
    padding-left: 11px;
    border-right: 1px solid #dcefff;
}

.share-main .ic {
    fill: #0b2d4a;
}

.share-more {
    flex: 1;
    display: flex;
    align-items: center;
    justify-content: center;
}

.share-more .caret {
    border-top-color: #0b2d4a;
}

.avatar {
    margin-left: 10px;
    width: 25px;
    height: 25px;
    border-radius: 50%;
    background: conic-gradient(#4285f4 0 25%, #34a853 25% 55%, #fbbc04 55% 70%, #ea4335 70% 100%);
    display: flex;
    align-items: center;
    justify-content: center;
}

.avatar span {
    width: 21px;
    height: 21px;
    border-radius: 50%;
    background: #c2185b;
    border: 1px solid #fff;
    color: #fff;
    font-size: 10px;
    display: flex;
    align-items: center;
    justify-content: center;
}

.toolbar {
    height: 25px;
    background: #eff3f9;
    border-radius: 13px;
    display: flex;
    align-items: center;
    padding-left: 7px;
}

.tb {
    width: 20px;
    height: 20px;
    flex: none;
    display: flex;
    align-items: center;
    justify-content: center;
}

.tb-first { margin-right: 1px; }
.tb-n { width: 14px; }
.tb-m { width: 19.5px; }
.tb-align { margin-left: 3px; }

.tb-sym {
    font-size: 10px;
    color: #444;
}

.tb-small {
    font-size: 8px;
}

.tb-small sub {
    font-size: 5px;
    margin-left: -1px;
}

.tb-big {
    width: 14px;
    font-size: 13px;
    margin-left: 3px;
}

.tb-plus {
    margin-left: 2px;
}

.tb-b { font-weight: 700; font-size: 11px; }
.tb-i { font-style: italic; font-weight: 700; font-size: 11px; }
.tb-s { text-decoration: line-through; font-size: 11px; }
.tb-rot { text-decoration: underline; font-size: 10px; }
.tb-sigma { font-size: 11px; }

.tb-a span {
    width: 15px;
    height: 14px;
    font-size: 10px;
    line-height: 11px;
    text-align: center;
    border-bottom: 3px solid #111;
}

.tb-fill {
    margin-left: 1px;
    flex-direction: column;
    gap: 1px;
}

.tb-fill i {
    width: 15px;
    height: 3px;
    background: #fff;
}

.tb-text {
    font-size: 10px;
    color: #444;
    flex: none;
}

.tb-zoom {
    width: 34px;
    text-align: center;
    margin-left: -1px;
}

.tb-font {
    width: 46px;
    padding-left: 7px;
}

.tb-caret {
    width: 11px;
    display: flex;
    justify-content: center;
    flex: none;
}

.tb-caret-sm {
    width: 8px;
}

.tb-sep {
    width: 1px;
    height: 12px;
    flex: none;
    background: #c7c7c7;
}

.sep-zoom { margin: 0 1px 0 5px; }
.sep-num { margin: 0 2px 0 2px; }
.sep-font { margin: 0 0 0 6px; }
.sep-size { margin: 0 1px 0 3px; }
.sep-merge { margin: 0 0 0 1px; }
.sep-rot { margin: 0 1px 0 2px; }

.tb-size {
    width: 21px;
    height: 15px;
    flex: none;
    margin-left: 3px;
    border: 1px solid #777;
    border-radius: 3px;
    font-size: 9.5px;
    text-align: center;
    line-height: 13px;
}

.is-off {
    opacity: .35;
}

.tb-collapse {
    margin-left: auto;
    margin-right: 8px;
}

.formula-bar {
    height: 17px;
    flex: none;
    display: flex;
    align-items: center;
    padding-left: 9px;
    font-size: 8.5px;
    color: #444;
    background: #fff;
}

.name-box {
    width: 44px;
}

.fx-sep {
    width: 1px;
    height: 10px;
    margin-left: 7px;
    background: #ddd;
}

.fx {
    margin-left: 6px;
    font-family: "Liberation Serif", serif;
    font-style: italic;
    color: #999;
    font-size: 10px;
}

.hscroll {
    margin-left: auto;
    margin-right: 10px;
    width: 91px;
    height: 2px;
    background: #e3e3e3;
}

.hscroll i {
    display: block;
    width: 65px;
    height: 2px;
    background: #0b57d0;
}

.col-heads {
    height: 16px;
    flex: none;
    display: flex;
    background: #fff;
    border-top: 1px solid #e0e0e0;
    border-bottom: 1px solid #c8d6ee;
    font-size: 7.5px;
    color: #666;
}

.col-heads span {
    width: 63px;
    flex: none;
    display: flex;
    align-items: center;
    justify-content: center;
    border-right: 1px solid #e0e0e0;
}

.col-heads .corner {
    width: 29px;
    border-right: 2px solid #c4c4c4;
}

.col-heads .col-last {
    width: 42px;
    padding-left: 21px;
    border-right: 0;
}

/* sheet body */
.sheet {
    height: 308px;
    flex: none;
    display: flex;
    background: #f8f9f8;
}

.row-heads {
    width: 29px;
    flex: none;
    display: flex;
    flex-direction: column;
}

.row-heads span {
    height: 13px;
    flex: none;
    display: flex;
    align-items: center;
    justify-content: center;
    background: #fff;
    border-right: 1px solid #d8d8d8;
    border-bottom: 1px solid #e4e4e4;
    font-size: 7.5px;
    color: #666;
}

.dash {
    width: 757px;
    flex: none;
    background: #fff;
    position: relative;
    display: flex;
    flex-direction: column;
}

.banner {
    height: 27px;
    flex: none;
    display: flex;
    align-items: center;
    background: #0b4fbc;
    padding-left: 2px;
    position: relative;
}

.banner h1 {
    margin: 0;
    font-family: "Inter", sans-serif;
    font-size: 10.5px;
    font-weight: 600;
    color: #fff;
    white-space: nowrap;
}

.date-pill {
    position: absolute;
    left: 631px;
    top: 1px;
    width: 121px;
    height: 25px;
    border-radius: 13px;
    background: #bfc0c2;
    display: flex;
    align-items: center;
    color: #0b4fbc;
    font-family: "Inter", sans-serif;
    font-size: 8.5px;
    font-weight: 600;
}

.pill-filter {
    width: 11px;
    height: 9px;
    margin-left: 8px;
    fill: #0b4fbc;
}

.pill-label {
    margin-left: 12px;
}

.pill-value {
    margin-left: 30px;
}

.date-pill .caret {
    margin-left: 2px;
    border-top-color: #0b4fbc;
}

.cards {
    margin-top: 12px;
    display: grid;
    grid-template-columns: repeat(8, 1fr);
    gap: 6px;
}

.card {
    background: #eee;
    border-bottom: 3px solid #b7b7b7;
    text-align: center;
}

.card-head {
    height: 14px;
    line-height: 14px;
    background: #0b4fbc;
    color: #fff;
    font-family: "Inter", sans-serif;
    font-size: 6.4px;
    font-weight: 600;
    white-space: nowrap;
}

.is-orange .card-head {
    background: #ff9900;
}

.card-value {
    height: 31px;
    line-height: 31px;
    font-family: "Inter", sans-serif;
    font-size: 13.2px;
    font-weight: 600;
    color: #111;
}

.legend {
    height: 14px;
    margin-top: 6px;
    display: flex;
    align-items: center;
    padding-left: 240px;
    gap: 10px;
    font-family: "Liberation Sans", sans-serif;
    font-size: 7.8px;
    letter-spacing: -.2px;
    color: #555;
}

.legend-item {
    display: flex;
    align-items: center;
    gap: 5px;
}

.legend-item i {
    width: 8px;
    height: 8px;
}

.c-visit { background: #1c4587; }
.c-sampling { background: #0b4fbc; }
.c-selling { background: #4285f4; }
.c-tidak { background: #b7b7b7; }

.chart {
    display: block;
    width: 757px;
    height: 201px;
    flex: none;
    font-family: "Liberation Sans", sans-serif;
}

.chart text {
    text-anchor: middle;
}

.bars-visit { fill: #1c4587; }
.bars-sampling { fill: #0b4fbc; }
.bars-selling { fill: #4285f4; }
.bars-tidak { fill: #b7b7b7; }

.axis {
    stroke: #888;
    stroke-width: 1;
}

.val-in { fill: #fff; font-size: 8.5px; }
.val-out { fill: #bdbdbd; font-size: 8.5px; }
.val-blue { fill: #1c4587; font-size: 8.5px; }
.val-light { fill: #4285f4; font-size: 8.5px; }
.cat { fill: #333; font-size: 6.7px; letter-spacing: -.25px; }

.selection {
    position: absolute;
    left: 668px;
    top: 114px;
    width: 89px;
    height: 13px;
    border: 1.5px solid #6f9fdf;
}

.selection b {
    position: absolute;
    right: -1px;
    top: -1.5px;
    width: 29px;
    height: 1.5px;
    background: #1a5fc8;
}

.selection i {
    position: absolute;
    right: -3px;
    bottom: -3px;
    width: 5px;
    height: 5px;
    border-radius: 50%;
    background: #1a5fc8;
}

.sheet-side {
    flex: 1;
}

.vscroll {
    width: 8px;
    flex: none;
    background: #f8f9f8;
}

.vscroll i {
    display: block;
    width: 7px;
    height: 300px;
    margin-left: 1px;
    background: #e3e5e6;
}

.peek {
    height: 14px;
    flex: none;
    background: #f8f9f8;
    display: flex;
    align-items: flex-start;
    overflow: hidden;
    padding-left: 47px;
    font-size: 8px;
    color: #666;
}

.peek-link {
    margin-top: 11px;
    color: #1a73e8;
}

.peek-box {
    margin: 7px 0 0 18px;
    width: 36px;
    height: 20px;
    border: 1px solid #999;
    border-radius: 3px;
    background: #fff;
    text-align: center;
    padding-top: 3px;
}

.peek-arrows {
    margin-left: auto;
    width: 8px;
    height: 14px;
    display: flex;
    flex-direction: column;
    align-items: center;
    justify-content: flex-end;
    padding-bottom: 3px;
}

.arrow-down {
    border-left: 2px solid transparent;
    border-right: 2px solid transparent;
    border-top: 2px solid #888;
}

.hstrip {
    height: 8px;
    flex: none;
    display: flex;
    align-items: center;
    justify-content: flex-end;
    gap: 7px;
    padding-right: 9px;
    background: linear-gradient(90deg, #f8f9f8 29px, #fff 29px);
    border-top: 1px solid #e0e0e0;
    border-bottom: 1px solid #e6e6e6;
}

.arrow-left {
    border-top: 2px solid transparent;
    border-bottom: 2px solid transparent;
    border-right: 2px solid #888;
}

.arrow-right {
    border-top: 2px solid transparent;
    border-bottom: 2px solid transparent;
    border-left: 2px solid #888;
}

/* sheet tabs */
.sheet-tabs {
    height: 22px;
    flex: none;
    display: flex;
    align-items: center;
    background: #f9fbfd;
    position: relative;
}

.st-add {
    width: 20px;
    margin-left: 28px;
    text-align: center;
    font-size: 14px;
    color: #333;
}

.st-list {
    margin-left: 10px;
    display: flex;
    flex-direction: column;
    gap: 2px;
    width: 10px;
}

.st-list i {
    height: 1px;
    background: #444;
}

.st-list-wrap {
    margin-left: 15px;
    width: 732px;
    height: 22px;
    display: flex;
    overflow: hidden;
    flex: none;
}

.st {
    flex: none;
    height: 22px;
    display: flex;
    align-items: center;
    gap: 6px;
    padding: 0 7px 0 8px;
    font-size: 9.5px;
    font-weight: 500;
    color: #444;
    white-space: nowrap;
}

.st.u-black { box-shadow: inset 0 -2px 0 #111; }
.st.u-orange { box-shadow: inset 0 -2px 0 #f3a33c; }

.st.is-active {
    background: #e1e9f7;
    color: #0b57d0;
}

.st.is-active .caret {
    border-top-color: #0b57d0;
}

.st.is-grey {
    background: #e9ecef;
}

.st-prev { margin-left: 8px; }
.st-next { margin-left: 15px; }
.st-side { margin-left: auto; margin-right: 13px; }

/* windows taskbar */
.taskbar {
    height: 30px;
    flex: none;
    display: flex;
    align-items: center;
    background: linear-gradient(90deg, #bccadf 0, #d3dcef 18%, #dfe5f7 40%, #dde2f4 65%, #d2d7e9 100%);
    position: relative;
    font-family: "Open Sans", sans-serif;
}

.weather {
    width: 100px;
    flex: none;
    display: flex;
    align-items: center;
    padding-left: 12px;
}

.weather-ic {
    width: 16px;
    height: 14px;
    flex: none;
}

.weather-text {
    margin-left: 4px;
    display: flex;
    flex-direction: column;
    font-size: 7.5px;
    line-height: 10px;
    color: #333;
    white-space: nowrap;
}

.weather-sub {
    color: #555;
}

.task-center {
    width: 505px;
    flex: none;
    margin-left: 179px;
    display: flex;
    align-items: center;
    height: 30px;
}

.win-logo {
    width: 15px;
    height: 15px;
    display: grid;
    grid-template-columns: 1fr 1fr;
    gap: 1px;
    flex: none;
}

.win-logo i {
    background: linear-gradient(135deg, #3cc0f0, #0f7fd6);
}

.task-search {
    width: 136px;
    height: 18px;
    margin-left: 8px;
    border-radius: 9px;
    background: #f1f3fa;
    display: flex;
    align-items: center;
    padding-left: 7px;
    font-size: 8.5px;
    color: #555;
    flex: none;
}

.task-search span {
    margin-left: 4px;
}

.search-art {
    width: 22px;
    height: 14px;
    margin-left: auto;
    margin-right: 8px;
}

.task-view {
    width: 13px;
    height: 13px;
    margin-left: 8px;
    flex: none;
}

.app-teams {
    width: 16px;
    height: 16px;
    margin-left: 14px;
    flex: none;
}

.app {
    position: relative;
    width: 16px;
    height: 16px;
    flex: none;
    display: block;
}

.app svg {
    display: block;
    width: 16px;
    height: 16px;
}

.app-wa { margin-left: 13px; }
.app-snip { margin-left: 11px; }
.app-folder { margin-left: 11px; }
.app-chrome { margin-left: 12px; }
.app-chrome.is-open { margin-left: 11px; }

.is-pinned::after {
    content: "";
    position: absolute;
    left: 5px;
    bottom: -4px;
    width: 5px;
    height: 2px;
    border-radius: 1px;
    background: #8a8f9c;
}

.app-chrome.is-open::before {
    content: "";
    position: absolute;
    left: -4px;
    top: -5px;
    width: 24px;
    height: 24px;
    border-radius: 3px;
    background: rgba(255, 255, 255, .55);
}

.app-chrome.is-open::after {
    content: "";
    position: absolute;
    left: 3px;
    bottom: -5px;
    width: 10px;
    height: 2px;
    border-radius: 1px;
    background: #1a6fc4;
}

.chrome-ic {
    position: relative;
    display: block;
    width: 15px;
    height: 15px;
    border-radius: 50%;
    background: radial-gradient(circle, #3b82e6 0 3px, #fff 3px 4px, transparent 4px), conic-gradient(#ea4335 0 33%, #fbbc04 33% 50%, #34a853 50% 83%, #ea4335 83%);
}

.badge {
    position: absolute;
    right: -5px;
    top: -5px;
    width: 10px;
    height: 10px;
    border-radius: 50%;
    color: #fff;
    font-family: "Roboto", sans-serif;
    font-size: 6px;
    font-weight: 400;
    line-height: 10px;
    text-align: center;
}

.b-blue { background: #1a73e8; }
.b-rose { background: #b0174f; }
.b-pink { background: #e8457f; }
.b-brown { background: #4e3b35; }
.b-orange { background: #f4511e; }

.tray {
    flex: 1;
    display: flex;
    align-items: center;
    height: 30px;
    min-width: 0;
    padding-left: 8px;
}

.tray-sync { margin-left: 8.5px; }
.tray-cloud { margin-left: 8.5px; }
.tray-wifi { margin-left: 7px; }
.tray-vol { margin-left: 3px; }
.tray-bat { margin-left: 4px; }

.clock {
    margin-left: 9px;
    width: 32px;
    flex: none;
    display: flex;
    flex-direction: column;
    align-items: flex-end;
    font-size: 7.5px;
    line-height: 10px;
    color: #333;
    white-space: nowrap;
}

.tray-bell {
    margin-left: 3px;
    fill: #16407f;
}
```
